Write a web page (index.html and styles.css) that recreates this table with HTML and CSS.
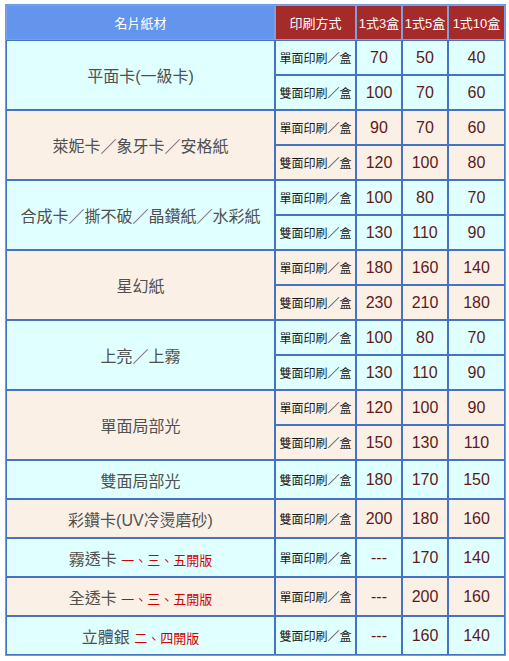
FILE: index.html
```html
<!DOCTYPE html>
<html lang="zh-Hant">
<head>
<meta charset="utf-8">
<title>名片紙材價目表</title>
<link rel="stylesheet" href="styles.css">
</head>
<body>
<table class="price">
  <colgroup>
    <col class="c-paper"><col class="c-mode"><col class="c-q"><col class="c-q"><col class="c-q10">
  </colgroup>
  <thead>
    <tr class="head">
      <th class="h-paper">名片紙材</th>
      <th class="h-red">印刷方式</th>
      <th class="h-red h-qty">1式3盒</th>
      <th class="h-red h-qty">1式5盒</th>
      <th class="h-red h-qty">1式10盒</th>
    </tr>
  </thead>
  <tbody>
    <tr class="sub cyan"><td class="paper" rowspan="2">平面卡(一級卡)</td><td class="mode">單面印刷／盒</td><td class="num">70</td><td class="num">50</td><td class="num">40</td></tr>
    <tr class="sub cyan"><td class="mode">雙面印刷／盒</td><td class="num">100</td><td class="num">70</td><td class="num">60</td></tr>

    <tr class="sub linen"><td class="paper" rowspan="2">萊妮卡／象牙卡／安格紙</td><td class="mode">單面印刷／盒</td><td class="num">90</td><td class="num">70</td><td class="num">60</td></tr>
    <tr class="sub linen"><td class="mode">雙面印刷／盒</td><td class="num">120</td><td class="num">100</td><td class="num">80</td></tr>

    <tr class="sub cyan"><td class="paper" rowspan="2">合成卡／撕不破／晶鑽紙／水彩紙</td><td class="mode">單面印刷／盒</td><td class="num">100</td><td class="num">80</td><td class="num">70</td></tr>
    <tr class="sub cyan"><td class="mode">雙面印刷／盒</td><td class="num">130</td><td class="num">110</td><td class="num">90</td></tr>

    <tr class="sub linen"><td class="paper" rowspan="2">星幻紙</td><td class="mode">單面印刷／盒</td><td class="num">180</td><td class="num">160</td><td class="num">140</td></tr>
    <tr class="sub linen"><td class="mode">雙面印刷／盒</td><td class="num">230</td><td class="num">210</td><td class="num">180</td></tr>

    <tr class="sub cyan"><td class="paper" rowspan="2">上亮／上霧</td><td class="mode">單面印刷／盒</td><td class="num">100</td><td class="num">80</td><td class="num">70</td></tr>
    <tr class="sub cyan"><td class="mode">雙面印刷／盒</td><td class="num">130</td><td class="num">110</td><td class="num">90</td></tr>

    <tr class="sub linen"><td class="paper" rowspan="2">單面局部光</td><td class="mode">單面印刷／盒</td><td class="num">120</td><td class="num">100</td><td class="num">90</td></tr>
    <tr class="sub linen"><td class="mode">雙面印刷／盒</td><td class="num">150</td><td class="num">130</td><td class="num">110</td></tr>

    <tr class="single cyan"><td class="paper">雙面局部光</td><td class="mode">雙面印刷／盒</td><td class="num">180</td><td class="num">170</td><td class="num">150</td></tr>
    <tr class="single linen"><td class="paper">彩鑽卡(UV冷燙磨砂)</td><td class="mode">雙面印刷／盒</td><td class="num">200</td><td class="num">180</td><td class="num">160</td></tr>
    <tr class="single cyan"><td class="paper">霧透卡 <span class="note">一、三、五開版</span></td><td class="mode">單面印刷／盒</td><td class="num">---</td><td class="num">170</td><td class="num">140</td></tr>
    <tr class="single linen"><td class="paper">全透卡 <span class="note">一、三、五開版</span></td><td class="mode">單面印刷／盒</td><td class="num">---</td><td class="num">200</td><td class="num">160</td></tr>
    <tr class="single cyan"><td class="paper">立體銀 <span class="note">二、四開版</span></td><td class="mode">雙面印刷／盒</td><td class="num">---</td><td class="num">160</td><td class="num">140</td></tr>
  </tbody>
</table>
</body>
</html>
```

FILE: styles.css
```css
html, body {
  background: #ffffff;
}
body {
  margin: 4px 0 0 5px;
  font-family: "Liberation Sans", "Noto Sans CJK TC", sans-serif;
}
.price {
  width: 501px;
  table-layout: fixed;
  border-collapse: separate;
  border-spacing: 0;
  border: 1px solid #6f9ae4;
}
.c-paper { width: 269px; }
.c-mode { width: 81px; }
.c-q { width: 46px; }
.c-q10 { width: 57px; }

.price th,
.price td {
  box-sizing: border-box;
  padding: 0;
  border: 1px solid #4672c2;
  text-align: center;
  vertical-align: middle;
  white-space: nowrap;
  overflow: hidden;
}
.head { height: 35px; }
.sub { height: 35px; }
.single { height: 39px; }

.price th {
  color: #ffffff;
  font-size: 13px;
  font-weight: normal;
  border-color: #7f9fe0;
}
.h-paper { background: #6495ed; }
.h-red { background: #a52a2a; }
.h-qty { font-weight: bold; }

.cyan td { background: #e0ffff; }
.linen td { background: #faf0e6; }

.paper {
  color: #505050;
  font-size: 16px;
}
.note {
  color: #d40000;
  font-size: 13px;
}
.mode {
  color: #1a1a1a;
  font-size: 12px;
}
.num {
  color: #5e1a1a;
  font-size: 16px;
}
```
